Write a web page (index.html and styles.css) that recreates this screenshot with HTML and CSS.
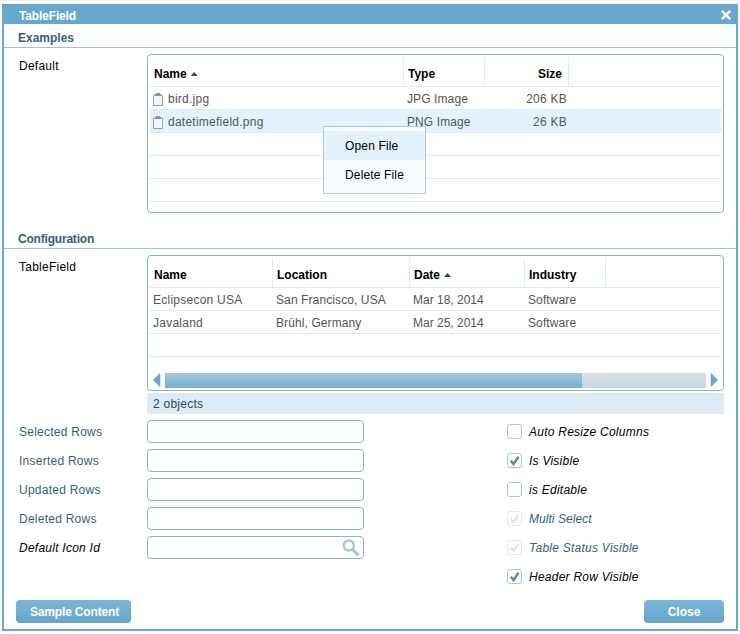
FILE: index.html
```html
<!DOCTYPE html>
<html lang="en">
<head>
<meta charset="utf-8">
<title>TableField</title>
<link rel="stylesheet" href="styles.css">
</head>
<body>
<div class="window">
  <header class="titlebar">
    <span class="title">TableField</span>
    <svg class="close-icon" width="10" height="10" viewBox="0 0 10 10"><path d="M.8 .8L9.200 9.200M9.200 .8L.8 9.200" stroke="#fff" stroke-width="2.500" fill="none"/></svg>
  </header>

  <h2 class="section">Examples</h2>
  <div class="field-row">
    <label class="label">Default</label>
    <div class="table files">
      <div class="tr head">
        <div class="th"><span>Name</span><i class="sort"></i></div><div class="th"><span>Type</span></div><div class="th num"><span>Size</span></div><div class="th last"></div>
      </div>
      <div class="tr">
        <div class="td"><svg class="file-icon" width="10" height="13" viewBox="0 0 10 13"><path d="M.5 2h9v10.500h-9z" fill="#f1f5fc" stroke="#8c9abc"/><path d="M.5 2v8M9.500 2v8" stroke="#aaa995"/><path d="M2 3V1h1V0h4v1h1v2z" fill="#7d94b3"/></svg><span>bird.jpg</span></div><div class="td mid">JPG Image</div><div class="td num">206 KB</div><div class="td"></div>
      </div>
      <div class="tr selected">
        <div class="td"><svg class="file-icon" width="10" height="13" viewBox="0 0 10 13"><path d="M.5 2h9v10.500h-9z" fill="#f1f5fc" stroke="#8c9abc"/><path d="M.5 2v8M9.500 2v8" stroke="#aaa995"/><path d="M2 3V1h1V0h4v1h1v2z" fill="#7d94b3"/></svg><span>datetimefield.png</span></div><div class="td mid">PNG Image</div><div class="td num">26 KB</div><div class="td"></div>
      </div>
      <div class="tr"></div>
      <div class="tr"></div>
      <div class="tr"></div>
      <div class="menu">
        <div class="item active">Open File</div>
        <div class="item">Delete File</div>
      </div>
    </div>
  </div>

  <h2 class="section config">Configuration</h2>
  <div class="field-row">
    <label class="label">TableField</label>
    <div class="table events">
      <div class="tr head">
        <div class="th"><span>Name</span></div><div class="th"><span>Location</span></div><div class="th"><span>Date</span><i class="sort"></i></div><div class="th"><span>Industry</span></div><div class="th last"></div>
      </div>
      <div class="tr"><div class="td">Eclipsecon USA</div><div class="td mid">San Francisco, USA</div><div class="td date">Mar 18, 2014</div><div class="td mid">Software</div></div>
      <div class="tr"><div class="td">Javaland</div><div class="td mid">Brühl, Germany</div><div class="td date">Mar 25, 2014</div><div class="td mid">Software</div></div>
      <div class="tr"></div>
      <div class="scrollbar">
        <svg width="9" height="15" viewBox="0 0 9 15"><path d="M8.500 1v14L1.500 8z" fill="#d9eaf5"/><path d="M7 0v14L0 7z" fill="#69a8d0"/></svg>
        <div class="track"><div class="thumb"></div></div>
        <svg width="9" height="15" viewBox="0 0 9 15"><path d="M0 0v14l7-7z" fill="#d9eaf5"/><path d="M1 0v14l7-7z" fill="#69a8d0"/></svg>
      </div>
    </div>
  </div>
  <div class="status">2 objects</div>

  <div class="form">
    <div class="inputs">
      <label class="label dim">Selected Rows</label><div class="input"></div>
      <label class="label dim">Inserted Rows</label><div class="input"></div>
      <label class="label dim">Updated Rows</label><div class="input"></div>
      <label class="label dim">Deleted Rows</label><div class="input"></div>
      <label class="label em">Default Icon Id</label>
      <div class="input search"><svg width="18" height="18" viewBox="0 0 18 18"><circle cx="6.800" cy="6.500" r="5" fill="none" stroke="#a3c5e6" stroke-width="2.400"/><path d="M10.500 10.300L16.500 16.200" stroke="#a3c5e6" stroke-width="3"/></svg></div>
    </div>
    <div class="checks">
      <div class="check"><i class="box"></i><span>Auto Resize Columns</span></div>
      <div class="check"><i class="box"><svg viewBox="0 0 13 13"><path d="M2.800 6.800L5.500 10L10.500 2.800" /></svg></i><span>Is Visible</span></div>
      <div class="check"><i class="box"></i><span>is Editable</span></div>
      <div class="check off"><i class="box"><svg viewBox="0 0 13 13"><path d="M2.800 6.800L5.500 10L10.500 2.800" /></svg></i><span class="tight">Multi Select</span></div>
      <div class="check off"><i class="box"><svg viewBox="0 0 13 13"><path d="M2.800 6.800L5.500 10L10.500 2.800" /></svg></i><span>Table Status Visible</span></div>
      <div class="check"><i class="box"><svg viewBox="0 0 13 13"><path d="M2.800 6.800L5.500 10L10.500 2.800" /></svg></i><span>Header Row Visible</span></div>
    </div>
  </div>

  <footer class="buttons">
    <div class="button sample">Sample Content</div>
    <div class="button close">Close</div>
  </footer>
</div>
</body>
</html>
```

FILE: styles.css
```css
* { box-sizing: border-box; }
body {
  margin: 0;
  border-top: 1px solid #e3f2fb;
  background: #fff;
  font: 12px/14px "Liberation Sans", Arial, sans-serif;
  letter-spacing: 0.25px;
  color: #000;
}
.window {
  width: 736px;
  height: 627px;
  margin: 3px 0 0 2px;
  border: 2px solid #67a8ce;
  border-top: 0;
  overflow: hidden;
}
.titlebar {
  display: flex;
  justify-content: space-between;
  height: 20px;
  padding: 5px 5px 0 15px;
  background: #67a8ce;
  color: #fff;
  font-weight: bold;
  letter-spacing: -0.15px;
}
.close-icon { margin-top: 1px; }
.section {
  height: 24px;
  margin: 0 0 6px;
  padding: 7px 0 0 14px;
  border-bottom: 1px solid #a1c3d9;
  font-size: 12px;
  line-height: 14px;
  letter-spacing: 0;
  color: #355f7e;
}
.section.config { margin-top: 12px; letter-spacing: -0.2px; }
.field-row { display: flex; }
.label { width: 143px; padding: 5px 0 0 15px; }
.dim { color: #355f7e; }
.em { font-style: italic; }

.table {
  position: relative;
  width: 577px;
  padding: 2px;
  border: 1px solid #8fb4c0;
  border-radius: 4px;
}
.files { height: 159px; }
.events { height: 136px; }
.tr {
  display: grid;
  height: 23px;
  border-bottom: 1px solid #dceeea;
  color: #555;
}
.files .tr { grid-template-columns: 254px 81px 84px 1fr; }
.events .tr { grid-template-columns: 123px 137px 115px 81px 1fr; }
.tr.head { height: 30px; color: #000; font-weight: bold; letter-spacing: 0; }
.th { display: flex; padding: 10px 0 0 4px; border-right: 1px solid #dceeea; }
.th.last { border: 0; }
.td { display: flex; padding: 5px 0 0 3px; white-space: nowrap; }
.td.mid { letter-spacing: 0.1px; }
.td.date { letter-spacing: 0; }
.th.num { justify-content: flex-end; padding-right: 6px; }
.td.num { justify-content: flex-end; padding-right: 2px; }
.file-icon { margin: 1px 5px 0 0; }
.selected { background: #e3f2fe; }
.sort {
  width: 7px;
  height: 4px;
  margin: 5px 0 0 4px;
  background: #444;
  clip-path: polygon(50% 0, 100% 100%, 0 100%);
}

.menu {
  position: absolute;
  left: 175px;
  top: 71px;
  width: 103px;
  height: 68px;
  padding-top: 4px;
  border: 1px solid #b4c8d7;
  background: #f8fcff;
  letter-spacing: 0.15px;
}
.item { height: 29px; padding: 8px 0 0 21px; }
.item.active { background: #e3f2fe; }

.scrollbar { display: flex; align-items: flex-start; margin: 16px 3px 0; }
.track {
  width: 541px;
  height: 15px;
  margin: 0 4px 0 3px;
  background: linear-gradient(#d4e1e6, #c6d5e0);
}
.scrollbar svg { flex: none; }
.track { flex: none; }
.thumb { width: 417px; height: 15px; background: linear-gradient(#a6c7db, #7aaed0); }
.status {
  width: 577px;
  height: 21px;
  margin: 2px 0 6px 143px;
  padding: 4px 0 0 6px;
  background: #dcebf4;
  color: #2f465c;
}

.form { display: flex; align-items: flex-start; gap: 143px; }
.inputs { display: grid; grid-template-columns: 143px 217px; row-gap: 6px; }
.input { height: 23px; border: 1px solid #8fb4c0; border-radius: 4px; }
.search { padding: 2px 3px 0 0; text-align: right; }
.search svg { display: inline-block; vertical-align: top; }
.check { display: flex; height: 29px; padding-top: 4px; font-style: italic; }
.check span { margin: 1px 0 0 7px; }
.check .tight { letter-spacing: 0.05px; }
.box { width: 15px; height: 15px; border: 1px solid #a9c7d6; border-radius: 3px; }
.box svg { display: block; width: 13px; height: 13px; }
.box path { fill: none; stroke: #5688aa; stroke-width: 2.4; }
.off { color: #355f7e; }
.off .box { border-color: #e3ebf0; }
.off path { stroke: #dfe7ee; }

.buttons { display: flex; justify-content: space-between; margin: 6px 12px 0; }
.button {
  height: 23px;
  padding-top: 5px;
  border-radius: 4px;
  background: linear-gradient(#7ab6dc, #67a6cb);
  color: #fff;
  font-weight: bold;
  letter-spacing: 0;
  text-align: center;
}
.sample { width: 115px; padding-left: 2px; letter-spacing: -0.15px; }
.close { width: 80px; }
```
